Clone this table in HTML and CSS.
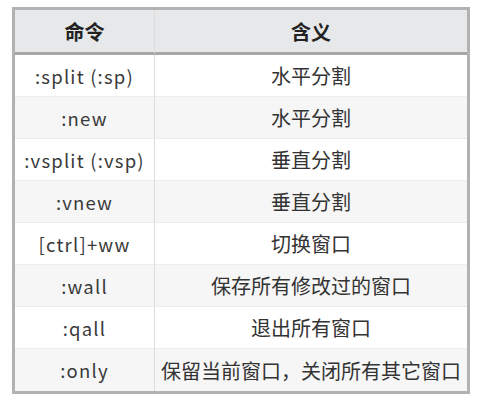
FILE: index.html
```html
<!DOCTYPE html>
<html lang="zh">
<head>
<meta charset="utf-8">
<link rel="stylesheet" href="styles.css">
</head>
<body>
<div class="tbl">
  <div class="cell head c1">命令</div>
  <div class="cell head">含义</div>

  <div class="cell c1 cmd">:split (:sp)</div>
  <div class="cell">水平分割</div>

  <div class="cell c1 cmd alt">:new</div>
  <div class="cell alt">水平分割</div>

  <div class="cell c1 cmd">:vsplit (:vsp)</div>
  <div class="cell">垂直分割</div>

  <div class="cell c1 cmd alt">:vnew</div>
  <div class="cell alt">垂直分割</div>

  <div class="cell c1 cmd">[ctrl]+ww</div>
  <div class="cell">切换窗口</div>

  <div class="cell c1 cmd alt">:wall</div>
  <div class="cell alt">保存所有修改过的窗口</div>

  <div class="cell c1 cmd">:qall</div>
  <div class="cell">退出所有窗口</div>

  <div class="cell c1 cmd alt last">:only</div>
  <div class="cell alt last">保留当前窗口，关闭所有其它窗口</div>
</div>
</body>
</html>
```
FILE: styles.css
```css
html, body {
  margin: 0;
  background: #ffffff;
}
body {
  padding: 7px 0 0 12px;
  font-family: "Noto Sans CJK SC", sans-serif;
  color: #333333;
}
.tbl {
  width: 458px;
  box-sizing: border-box;
  border: 3px solid #b2b2b2;
  display: grid;
  grid-template-columns: 140px 1fr;
}
.cell {
  height: 42px;
  box-sizing: border-box;
  border-bottom: 1px solid #ececec;
  display: flex;
  align-items: center;
  justify-content: center;
  font-size: 20px;
  background: #ffffff;
  white-space: nowrap;
}
.cmd {
  font-size: 18.5px;
  letter-spacing: 1.2px;
  color: #3a3a3a;
}
.c1 {
  border-right: 1px solid #dcdcdc;
}
.alt {
  background: #f6f6f6;
}
.head {
  height: 45px;
  background: #e7e8e9;
  border-bottom: 3px solid #a6a6a6;
  font-weight: bold;
  color: #222222;
}
.last {
  border-bottom: none;
}
```
